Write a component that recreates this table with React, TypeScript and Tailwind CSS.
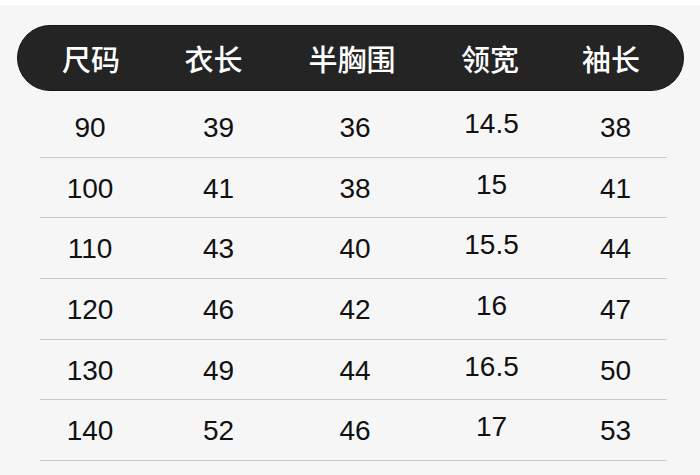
import React from "react";

const headers = ["尺码", "衣长", "半胸围", "领宽", "袖长"];
const rows: { h: string; v: string[] }[] = [
  { h: "h-[61px]", v: ["90", "39", "36", "14.5", "38"] },
  { h: "h-[60px]", v: ["100", "41", "38", "15", "41"] },
  { h: "h-[61px]", v: ["110", "43", "40", "15.5", "44"] },
  { h: "h-[61px]", v: ["120", "46", "42", "16", "47"] },
  { h: "h-[60px]", v: ["130", "49", "44", "16.5", "50"] },
  { h: "h-[61px]", v: ["140", "52", "46", "17", "53"] },
];

export default function App() {
  return (
    <div className="w-[700px] h-[475px] bg-white overflow-hidden">
      <div className="mt-[5px] h-[470px] bg-[#f6f6f6] pt-[20px]">
        <div className="ml-[17px] w-[667px] h-[66px] rounded-full bg-[#242424] border border-[#141414] grid grid-cols-[146px_99px_178px_98px_144px] items-center text-white text-[29px] font-medium leading-none [font-family:'Noto_Sans_CJK_SC','Noto_Sans',sans-serif]">
          {headers.map((t) => (
            <div key={t} className="text-center">{t}</div>
          ))}
        </div>
        <div className="ml-[40px] w-[627px] mt-[6px]">
          {rows.map((r, i) => (
            <div
              key={i}
              className={`${r.h} pt-[2px] border-b border-[#c8c8c8] grid grid-cols-[100px_157px_116px_157px_91px] items-center text-[28px] text-[#111] leading-none [font-family:'Liberation_Sans',Arial,sans-serif]`}
            >
              {r.v.map((v, j) => (
                <div key={j} className={j === 3 ? "text-center -translate-y-1" : "text-center"}>
                  {v}
                </div>
              ))}
            </div>
          ))}
        </div>
      </div>
    </div>
  );
}
